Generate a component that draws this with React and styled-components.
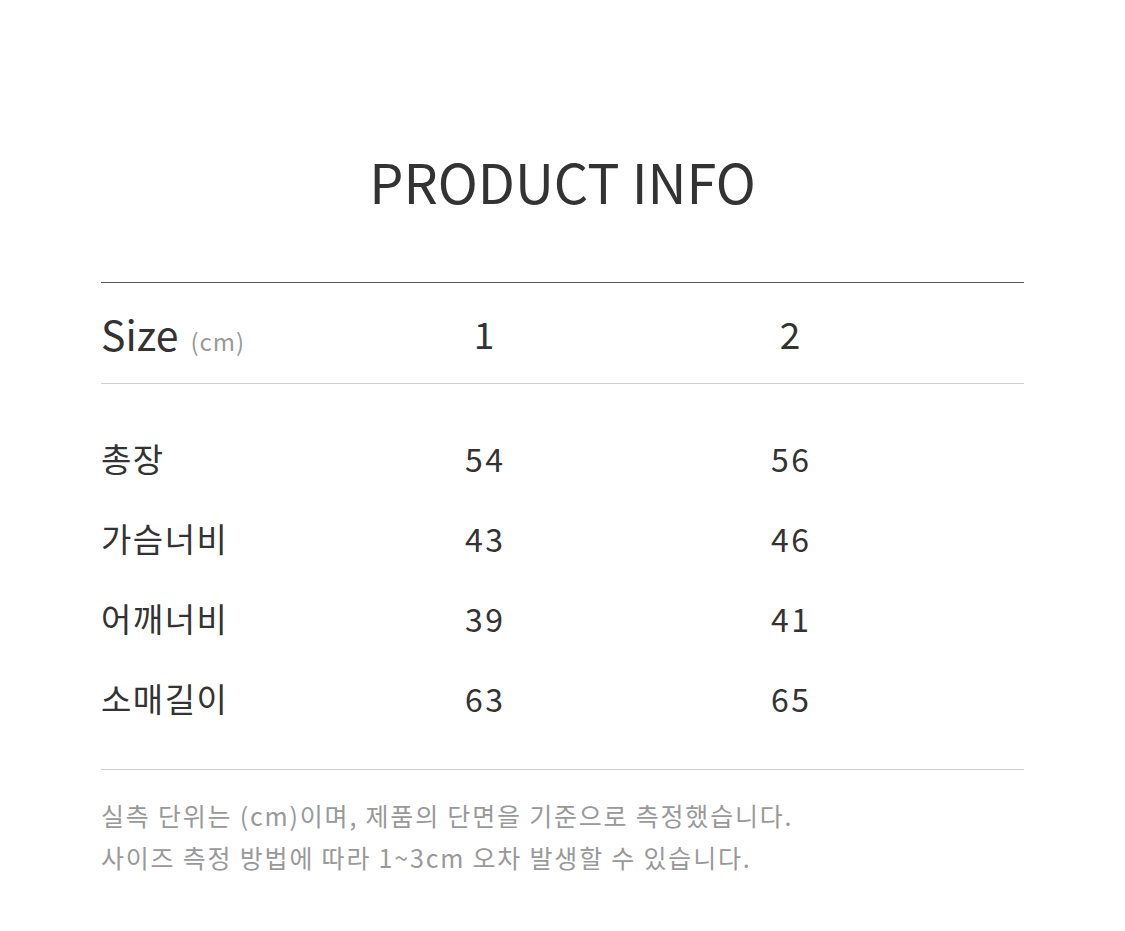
import React from "react";
import styled, { createGlobalStyle } from "styled-components";

const GlobalStyle = createGlobalStyle`
  html, body {
    margin: 0;
    padding: 0;
    background: #ffffff;
  }
  body {
    font-family: "Noto Sans CJK KR", "Noto Sans", sans-serif;
    color: #333;
  }
`;

const Page = styled.div`
  width: 1125px;
  min-height: 931px;
  padding: 146px 101px 0;
  box-sizing: border-box;
`;

const Title = styled.h1`
  margin: 0;
  text-align: center;
  font-size: 54px;
  font-weight: 400;
  line-height: 70px;
  color: #333;
`;

const Table = styled.div`
  margin-top: 66px;
  border-top: 1.5px solid #555;
`;

const Row = styled.div`
  display: grid;
  grid-template-columns: 230px 306px 306px 1fr;
  align-items: center;
  height: ${(p) => p.$h}px;
`;

const HeadRow = styled(Row)`
  border-bottom: 1px solid #d0d0d0;
`;

const Body = styled.div`
  padding: 34px 0 31px;
  border-bottom: 1px solid #d0d0d0;
`;

const SizeLabel = styled.div`
  font-size: 41px;
  color: #333;
  display: flex;
  align-items: baseline;
  gap: 12px;
`;

const Unit = styled.span`
  font-size: 24px;
  color: #999;
  letter-spacing: 1px;
`;

const Label = styled.div`
  font-size: 33px;
  letter-spacing: 1.5px;
  color: #333;
`;

const Cell = styled.div`
  text-align: center;
  font-size: ${(p) => (p.$head ? 37 : 32)}px;
  letter-spacing: ${(p) => (p.$head ? 0 : 2.5)}px;
  padding-left: ${(p) => (p.$head ? 0 : 2.5)}px;
  color: #333;
`;

const Notes = styled.div`
  padding-top: 24px;
  font-size: 25px;
  line-height: 42px;
  color: #999;
  letter-spacing: 1.8px;
`;

const rows = [
  ["총장", 54, 56],
  ["가슴너비", 43, 46],
  ["어깨너비", 39, 41],
  ["소매길이", 63, 65],
];

export default function App() {
  return (
    <>
      <GlobalStyle />
      <Page>
        <Title>PRODUCT INFO</Title>
        <Table>
          <HeadRow $h={100}>
            <SizeLabel>
              Size <Unit>(cm)</Unit>
            </SizeLabel>
            <Cell $head>1</Cell>
            <Cell $head>2</Cell>
          </HeadRow>
          <Body>
            {rows.map(([name, a, b]) => (
              <Row key={name} $h={80}>
                <Label>{name}</Label>
                <Cell>{a}</Cell>
                <Cell>{b}</Cell>
              </Row>
            ))}
          </Body>
        </Table>
        <Notes>
          실측 단위는 (cm)이며, 제품의 단면을 기준으로 측정했습니다.
          <br />
          사이즈 측정 방법에 따라 1~3cm 오차 발생할 수 있습니다.
        </Notes>
      </Page>
    </>
  );
}
